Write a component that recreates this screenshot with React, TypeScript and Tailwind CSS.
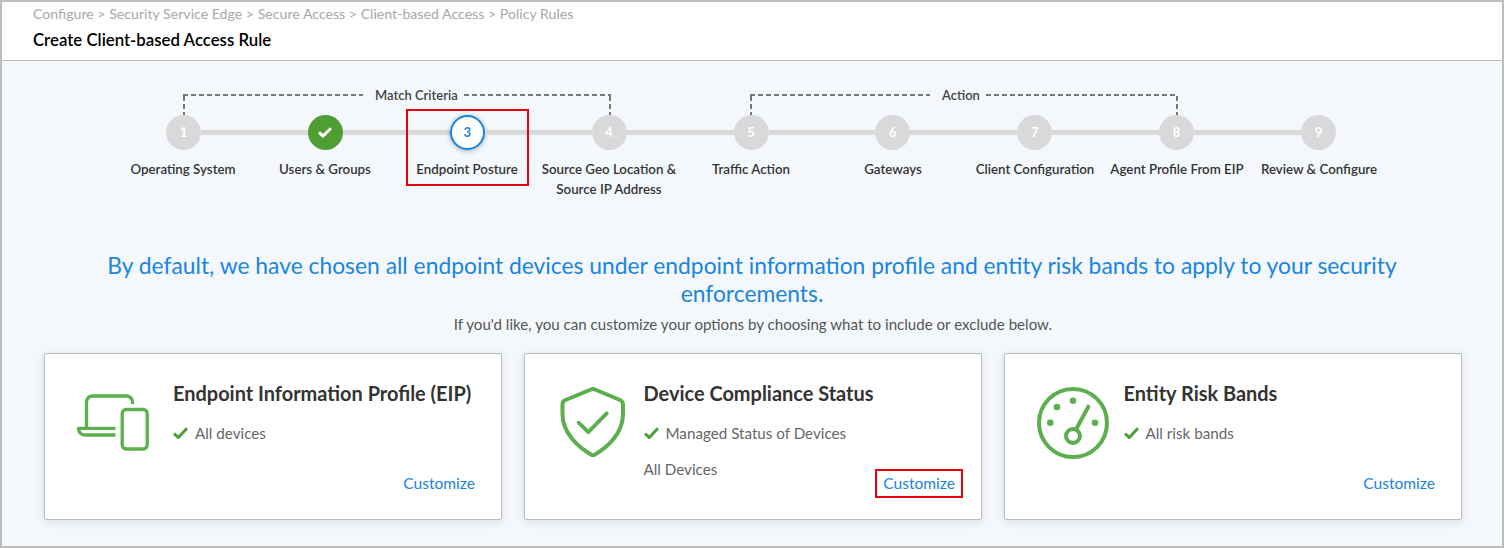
const steps = [
  "Operating System",
  "Users & Groups",
  "Endpoint Posture",
  "Source Geo Location & Source IP Address",
  "Traffic Action",
  "Gateways",
  "Client Configuration",
  "Agent Profile From EIP",
  "Review & Configure",
];

function DevicesIcon() {
  return (
    <svg width="74" height="58" viewBox="0 0 74 58" fill="none" stroke="#5cae4e" strokeWidth="3.3">
      <path d="M10.5 35V9a6 6 0 0 1 6-6H50.5a6 6 0 0 1 6 6V11" />
      <path d="M39.5 35.3H2.5c0 4 2.5 6.7 6.5 6.7H39.5" strokeLinejoin="round" />
      <rect x="46.2" y="16.5" width="25" height="39.5" rx="4" />
    </svg>
  );
}

function ShieldIcon() {
  return (
    <svg width="66" height="71" viewBox="0 0 66 71" fill="none" stroke="#5cae4e" strokeWidth="4" strokeLinecap="round" strokeLinejoin="round">
      <path d="M31 2.5a5 5 0 0 1 4 0L60 13a5 5 0 0 1 3 4.5V27C63 46 48 60 35 67.5a4 4 0 0 1-4 0C18 60 2.5 46 2.5 27V17.5a5 5 0 0 1 3-4.5Z" />
      <path d="M18.7 35.7L28.3 45.2L46.7 26.3" strokeWidth="3.8" />
    </svg>
  );
}

function GaugeIcon() {
  return (
    <svg width="74" height="74" viewBox="0 0 74 74" fill="none" stroke="#5cae4e" strokeWidth="4" strokeLinecap="round">
      <circle cx="37" cy="37" r="34" />
      <circle cx="37" cy="50" r="7" />
      <path d="M40 43.5L52.3 20.7" />
      <g fill="#5cae4e" stroke="none">
        <circle cx="37" cy="14.7" r="3.3" />
        <circle cx="21" cy="21" r="3.3" />
        <circle cx="14.3" cy="36.7" r="3.3" />
        <circle cx="59" cy="36.7" r="3.3" />
      </g>
    </svg>
  );
}

function Check() {
  return (
    <svg width="15" height="12" viewBox="0 0 15 12" fill="none" stroke="#4a9d37" strokeWidth="3" className="mr-[7px] shrink-0">
      <path d="M1 6.5L5.3 10.5L14 1.2" />
    </svg>
  );
}

const dashX = "h-[2px] bg-[repeating-linear-gradient(90deg,#777_0_5px,transparent_5px_8px)]";
const dashY = "w-[2px] flex-1 bg-[repeating-linear-gradient(180deg,#777_0_5px,transparent_5px_8px)]";

function Bracket({ label }: { label: string }) {
  return (
    <div className="flex h-[21px] w-[428px] items-start">
      <div className="flex h-full w-[180px] shrink-0 flex-col">
        <div className={dashX} />
        <div className={dashY} />
      </div>
      <span className="-mt-[7px] pr-[6px] pl-[12px] text-[13px] leading-4 font-semibold text-[#444]">{label}</span>
      <div className="flex h-full flex-1 flex-col items-end">
        <div className={dashX + " w-full"} />
        <div className={dashY} />
      </div>
    </div>
  );
}

function StepCircle({ n }: { n: number }) {
  if (n === 2) {
    return (
      <div className="flex h-[35px] w-[35px] shrink-0 items-center justify-center rounded-full bg-[#4f9e33]">
        <svg width="14" height="11" viewBox="0 0 14 11" fill="none" stroke="#fff" strokeWidth="3">
          <path d="M1 5.5L5 9L13 1.2" />
        </svg>
      </div>
    );
  }
  if (n === 3) {
    return (
      <div className="flex h-[35px] w-[35px] shrink-0 items-center justify-center rounded-full border-2 border-[#1a85dc] bg-white text-[13px] font-bold text-[#1a85dc] shadow-[0_1px_5px_rgba(0,0,0,0.3)]">
        3
      </div>
    );
  }
  return (
    <div className="flex h-[35px] w-[35px] shrink-0 items-center justify-center rounded-full bg-[#d9d9d9] text-[13px] font-bold text-white">
      {n}
    </div>
  );
}

function Customize({ marked }: { marked?: boolean }) {
  return (
    <a className={"mr-[18px] mb-[21px] self-end border-2 px-[6px] text-[15.6px] leading-[25px] text-[#1a85dc] " + (marked ? "border-[#e8000d]" : "border-transparent")}>
      Customize
    </a>
  );
}

function Card(props: { icon: React.ReactNode; iconClass: string; title: string; item: string; extra?: string; marked?: boolean }) {
  return (
    <div className="flex h-[167px] w-[458px] rounded-[2px] border border-[#bbb] bg-white shadow-[0_2px_10px_rgba(0,0,0,0.1)]">
      <div className={props.iconClass}>{props.icon}</div>
      <div className="min-w-0 flex-1 pt-[27px]">
        <h3 className="text-[19.95px] leading-6 font-bold whitespace-nowrap text-[#333]">{props.title}</h3>
        <div className="mt-[16px] flex h-6 items-center text-[15.2px] text-[#666]">
          <Check />
          {props.item}
        </div>
        {props.extra && <p className="mt-3 text-[15.2px] leading-6 text-[#666]">{props.extra}</p>}
      </div>
      <Customize marked={props.marked} />
    </div>
  );
}

export default function App() {
  return (
    <div className="flex h-[548px] w-[1504px] flex-col overflow-hidden border-2 border-[#bdbdbd] bg-white font-['Lato',sans-serif]">
      <header className="h-[59px] shrink-0 border-b border-[#bdbdbd] pl-[31px]">
        <p className="pt-[2px] text-[14.15px] leading-5 text-[#a8a8a8]">
          Configure &gt; Security Service Edge &gt; Secure Access &gt; Client-based Access &gt; Policy Rules
        </p>
        <h1 className="mt-[4px] text-[16.8px] leading-6 font-semibold text-black">Create Client-based Access Rule</h1>
      </header>

      <main className="flex-1 bg-[#f4f8fd] pt-[33px]">
        <div className="ml-[181px] flex gap-[139px]">
          <Bracket label="Match Criteria" />
          <Bracket label="Action" />
        </div>

        <div className="ml-[110px] w-[1278px]">
          <div className="flex items-center px-[54px]">
            {steps.map((s, i) => (
              <div key={s} className={i < 8 ? "flex flex-1 items-center" : "flex items-center"}>
                <StepCircle n={i + 1} />
                {i < 8 && <div className="h-[5px] flex-1 bg-[#d9d9d9]" />}
              </div>
            ))}
          </div>
          <div className="mt-[9px] grid h-10 grid-cols-9">
            {steps.map((s, i) => (
              <div key={s} className="relative text-center text-[13.3px] leading-5 font-semibold text-[#333]">
                {i === 3 ? (
                  <>
                    Source Geo Location &amp;
                    <br />
                    Source IP Address
                  </>
                ) : (
                  s
                )}
                {i === 2 && <div className="absolute top-[-50px] left-[10px] h-[77px] w-[123px] border-2 border-[#e8000d]" />}
              </div>
            ))}
          </div>
        </div>

        <h2 className="mx-auto mt-[52px] w-[1320px] text-center text-[22.83px] leading-7 text-[#1a85dc]">
          By default, we have chosen all endpoint devices under endpoint information profile and entity risk bands to apply to your security enforcements.
        </h2>
        <p className="mt-[7px] pl-[2px] text-center text-[15.1px] leading-5 text-[#555]">
          If you'd like, you can customize your options by choosing what to include or exclude below.
        </p>

        <div className="mt-[19px] ml-[42px] flex gap-[22px]">
          <Card
            icon={<DevicesIcon />}
            iconClass="w-[128px] shrink-0 pt-[39px] pl-[31px]"
            title="Endpoint Information Profile (EIP)"
            item="All devices"
          />
          <Card
            icon={<ShieldIcon />}
            iconClass="w-[118.5px] shrink-0 pt-[33px] pl-[35px]"
            title="Device Compliance Status"
            item="Managed Status of Devices"
            extra="All Devices"
            marked
          />
          <Card
            icon={<GaugeIcon />}
            iconClass="w-[118.5px] shrink-0 pt-[32px] pl-[31px]"
            title="Entity Risk Bands"
            item="All risk bands"
          />
        </div>
      </main>
    </div>
  );
}
